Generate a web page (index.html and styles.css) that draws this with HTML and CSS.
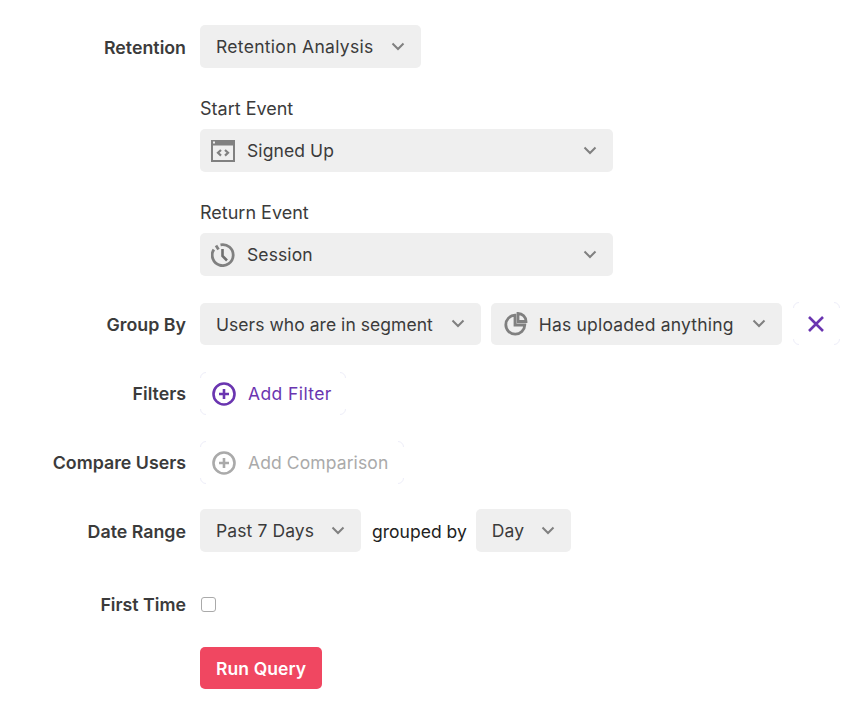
FILE: index.html
```html
<!DOCTYPE html>
<html>
<head>
  <title>Retention</title>
  <link rel="stylesheet" href="styles.css">
</head>
<body>

<form class="query">
  <div class="row">
    <label class="name lower">Retention</label>
    <div class="fields">
      <div class="select analysis">Retention Analysis
        <svg class="arrow" viewBox="0 0 14 9"><path d="M1.5 1.5 7 7l5.5-5.5"/></svg>
      </div>
    </div>
  </div>

  <div class="row sub first-sub">
    <div></div>
    <div class="stack">
      <div class="caption">Start Event</div>
      <div class="select wide">
        <svg class="icon" viewBox="0 0 24 24">
          <path class="solid" fill-rule="evenodd" d="M0 1h24v22H0zM2 6.500v14.500h20V6.500z"/>
          <rect class="hole" x="2" y="2.500" width="2" height="2"/>
          <path class="line" d="M10 11l-3 2.800 3 2.800M14 11l3 2.800-3 2.800"/>
        </svg>
        <span class="text">Signed Up</span>
        <svg class="arrow" viewBox="0 0 14 9"><path d="M1.5 1.5 7 7l5.5-5.500"/></svg>
      </div>
    </div>
  </div>

  <div class="row sub">
    <div></div>
    <div class="stack">
      <div class="caption">Return Event</div>
      <div class="select wide">
        <svg class="icon" viewBox="0 0 24 24">
          <path class="ring" d="M9.500 1.800A10.500 10.500 0 1 1 2.800 6.500"/>
          <path class="ring" d="M5 2.500 7.500 6.500"/>
          <path class="hand" d="M11.500 6v7l4.500 4.500"/>
        </svg>
        <span class="text">Session</span>
        <svg class="arrow" viewBox="0 0 14 9"><path d="M1.5 1.5 7 7l5.5-5.500"/></svg>
      </div>
    </div>
  </div>

  <div class="row group">
    <label class="name lower">Group By</label>
    <div class="fields">
      <div class="select short segment">Users who are in segment
        <svg class="arrow" viewBox="0 0 14 9"><path d="M1.5 1.5 7 7l5.5-5.500"/></svg>
      </div>
      <div class="select short with-icon">
        <svg class="icon" viewBox="0 0 24 24">
          <path class="ring" d="M11 3.200a9.500 9.500 0 1 0 9.800 9.800H11z"/>
          <path class="ring" d="M14 1.500a8 8 0 0 1 8 8h-8z"/>
        </svg>
        <span class="text">Has uploaded anything</span>
        <svg class="arrow" viewBox="0 0 14 9"><path d="M1.5 1.5 7 7l5.5-5.500"/></svg>
      </div>
      <button type="button" class="remove ghost">
        <svg viewBox="0 0 16 16"><path d="M1 1l14 14M15 1 1 15"/></svg>
      </button>
    </div>
  </div>

  <div class="row filters">
    <label class="name">Filters</label>
    <div class="fields">
      <button type="button" class="add ghost">
        <svg class="icon" viewBox="0 0 24 24">
          <circle cx="12" cy="12" r="10.500"/>
          <path d="M12 7v10M7 12h10"/>
        </svg>
        Add Filter
      </button>
    </div>
  </div>

  <div class="row compare">
    <label class="name">Compare Users</label>
    <div class="fields">
      <button type="button" class="add ghost off">
        <svg class="icon" viewBox="0 0 24 24">
          <circle cx="12" cy="12" r="10.500"/>
          <path d="M12 7v10M7 12h10"/>
        </svg>
        Add Comparison
      </button>
    </div>
  </div>

  <div class="row dates">
    <label class="name lower">Date Range</label>
    <div class="fields">
      <div class="select">Past 7 Days
        <svg class="arrow" viewBox="0 0 14 9"><path d="M1.5 1.5 7 7l5.5-5.500"/></svg>
      </div>
      <span class="joiner">grouped by</span>
      <div class="select">Day
        <svg class="arrow" viewBox="0 0 14 9"><path d="M1.5 1.5 7 7l5.5-5.500"/></svg>
      </div>
    </div>
  </div>

  <div class="row first-time">
    <label class="name">First Time</label>
    <div class="fields">
      <span class="check"></span>
    </div>
  </div>

  <div class="row run">
    <div></div>
    <div class="fields">
      <button type="button" class="submit">Run Query</button>
    </div>
  </div>
</form>

</body>
</html>
```

FILE: styles.css
```css
body {
  margin: 0;
  background: #fff;
  color: #3b3b3b;
  font-family: Inter, "Liberation Sans", sans-serif;
  font-size: 18px;
}
.query {
  padding-top: 25px;
}
.row {
  display: grid;
  grid-template-columns: 186px 1fr;
  column-gap: 14px;
  align-items: center;
}
.name {
  text-align: right;
  font-weight: 600;
  font-size: 17.8px;
}
.lower {
  padding-top: 2px;
}
.fields {
  display: flex;
  align-items: center;
}
.stack {
  display: flex;
  flex-direction: column;
}
.first-sub { margin-top: 29px; }
.sub + .sub { margin-top: 29px; }
.caption {
  height: 22px;
  line-height: 24px;
  margin-bottom: 10px;
  font-size: 18px;
}
.select {
  display: inline-flex;
  align-items: center;
  height: 43px;
  padding: 0 16px;
  background: #efefef;
  border-radius: 5px;
  white-space: nowrap;
  font-size: 17.5px;
  letter-spacing: 0.1px;
}
.select .arrow {
  margin-left: 17px;
}
.analysis {
  letter-spacing: 0.3px;
}
.wide {
  width: 413px;
  box-sizing: border-box;
  padding: 0 16px 0 11px;
}
.wide .arrow {
  margin-left: auto;
}
.short {
  box-sizing: border-box;
  height: 42px;
  padding-top: 2px;
}
.short .arrow,
.short .icon {
  margin-top: -2px;
}
.segment {
  letter-spacing: 0.04px;
}
.segment .arrow {
  margin-left: 18px;
}
.with-icon {
  padding-left: 13px;
  margin-left: 10px;
  letter-spacing: 0.2px;
}
.with-icon .text {
  margin-left: 11px;
}
.with-icon .arrow {
  margin-left: 18px;
}
.arrow {
  width: 14px;
  height: 9px;
  fill: none;
  stroke: #808080;
  stroke-width: 2;
}
.icon {
  width: 24px;
  height: 24px;
  flex: none;
  fill: none;
}
.text {
  margin-left: 12px;
}
.solid { fill: #808080; }
.hole { fill: #efefef; }
.line {
  stroke: #808080;
  stroke-width: 2.2;
  fill: none;
}
.ring {
  stroke: #808080;
  stroke-width: 2.8;
  fill: none;
}
.hand {
  stroke: #707070;
  stroke-width: 2.6;
  fill: none;
}
.group { margin-top: 26px; }
.ghost {
  position: relative;
  box-sizing: border-box;
  height: 43px;
  padding: 0;
  background: #fff;
  border: 1px solid #eeeef9;
  border-radius: 6px;
}
/* only the corners of the border stay visible */
.ghost::before,
.ghost::after {
  content: "";
  position: absolute;
  border: 0 solid #fff;
}
.ghost::before {
  top: -1px;
  bottom: -1px;
  left: 5px;
  right: 5px;
  border-width: 1px 0;
}
.ghost::after {
  top: 5px;
  bottom: 5px;
  left: -1px;
  right: -1px;
  border-width: 0 1px;
}
.remove {
  width: 47px;
  margin-left: 11px;
}
.remove svg {
  display: block;
  width: 16px;
  height: 16px;
  margin: auto;
  fill: none;
  stroke: #6a35b0;
  stroke-width: 2.6;
}
.filters { margin-top: 27px; }
.compare { margin-top: 26px; }
.add {
  display: inline-flex;
  align-items: center;
  gap: 12px;
  padding: 0 13px 0 11px;
  color: #6a35b0;
  font-family: inherit;
  font-size: 17.5px;
  letter-spacing: 0.4px;
}
.add .icon circle,
.add .icon path {
  stroke: #6a35b0;
  stroke-width: 2.6;
}
.off {
  color: #aaa;
  padding-right: 15px;
  letter-spacing: 0.1px;
}
.off .icon circle,
.off .icon path {
  stroke: #aaa;
}
.dates { margin-top: 25px; }
.joiner {
  margin: 0 9px 0 11px;
  padding-top: 2px;
  color: #222;
  font-size: 17.5px;
}
.first-time { margin-top: 42px; }
.check {
  display: block;
  width: 13px;
  height: 13px;
  margin-left: 1px;
  background: #fff;
  border: 1px solid #aaa;
  border-radius: 3px;
}
.run { margin-top: 32px; }
.submit {
  height: 42px;
  padding: 0 16px;
  background: #f04761;
  border: 0;
  border-radius: 5px;
  color: #fff;
  font-family: inherit;
  font-size: 17.5px;
  font-weight: 600;
  letter-spacing: 0.1px;
}
```
